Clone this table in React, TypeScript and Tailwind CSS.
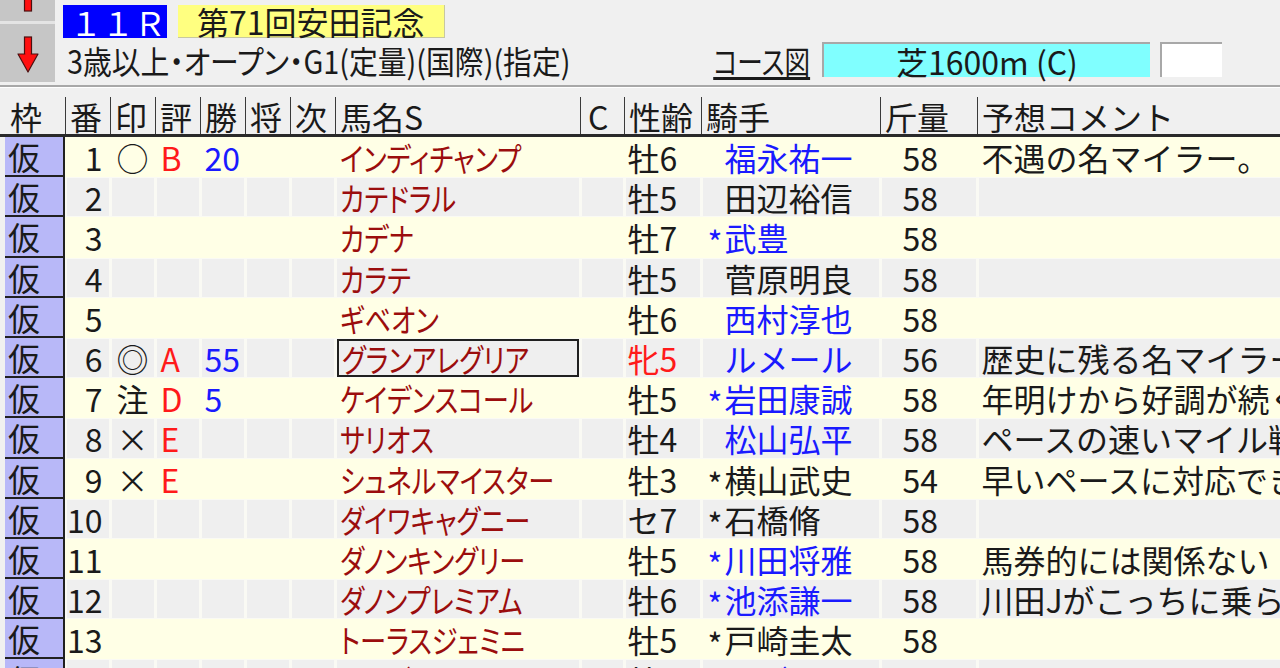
import React from 'react';

type Row = {
  no: string;
  mark?: string;
  ev?: string;
  win?: string;
  name: string;
  sex: string;
  sexRed?: boolean;
  star?: boolean;
  jockey: string;
  blue?: boolean;
  kg: string;
  comment?: string;
  selected?: boolean;
};

const rows: Row[] = [
  { no: '1', mark: '○', ev: 'B', win: '20', name: 'インディチャンプ', sex: '牡6', jockey: '福永祐一', blue: true, kg: '58', comment: '不遇の名マイラー。' },
  { no: '2', name: 'カテドラル', sex: '牡5', jockey: '田辺裕信', kg: '58' },
  { no: '3', name: 'カデナ', sex: '牡7', star: true, jockey: '武豊', blue: true, kg: '58' },
  { no: '4', name: 'カラテ', sex: '牡5', jockey: '菅原明良', kg: '58' },
  { no: '5', name: 'ギベオン', sex: '牡6', jockey: '西村淳也', blue: true, kg: '58' },
  { no: '6', mark: '◎', ev: 'A', win: '55', name: 'グランアレグリア', sex: '牝5', sexRed: true, jockey: 'ルメール', blue: true, kg: '56', comment: '歴史に残る名マイラー', selected: true },
  { no: '7', mark: '注', ev: 'D', win: '5', name: 'ケイデンスコール', sex: '牡5', star: true, jockey: '岩田康誠', blue: true, kg: '58', comment: '年明けから好調が続く' },
  { no: '8', mark: '×', ev: 'E', name: 'サリオス', sex: '牡4', jockey: '松山弘平', blue: true, kg: '58', comment: 'ペースの速いマイル戦' },
  { no: '9', mark: '×', ev: 'E', name: 'シュネルマイスター', sex: '牡3', star: true, jockey: '横山武史', kg: '54', comment: '早いペースに対応できれば' },
  { no: '10', name: 'ダイワキャグニー', sex: 'セ7', star: true, jockey: '石橋脩', kg: '58' },
  { no: '11', name: 'ダノンキングリー', sex: '牡5', star: true, jockey: '川田将雅', blue: true, kg: '58', comment: '馬券的には関係ない' },
  { no: '12', name: 'ダノンプレミアム', sex: '牡6', star: true, jockey: '池添謙一', blue: true, kg: '58', comment: '川田Jがこっちに乗らない' },
  { no: '13', name: 'トーラスジェミニ', sex: '牡5', star: true, jockey: '戸崎圭太', kg: '58' },
  { no: '14', name: 'ラウダシオン', sex: '牡4', star: true, jockey: 'Ｍデムーロ', blue: true, kg: '58', comment: 'ここも買える一頭だが' },
];

const Cell = ({ w, gray, className, children }: { w: string; gray: boolean; className?: string; children?: React.ReactNode }) => (
  <div className={`shrink-0 h-full px-[1.5px] py-[1px] ${w}`}>
    <div className={`h-full flex items-center whitespace-nowrap ${gray ? 'bg-[#efefef]' : ''} ${className ?? ''}`}>{children}</div>
  </div>
);

const Head = ({ w, label, className }: { w: string; label: string; className?: string }) => (
  <div className={`shrink-0 h-full pt-[9px] ${w}`}>
    <div className={`h-full border-l-[1.5px] border-[#3a3a3a] flex items-center whitespace-nowrap ${className ?? 'pl-[4px]'}`}>{label}</div>
  </div>
);

const App = () => {
  return (
    <div className="w-[1280px] h-[668px] overflow-hidden bg-[#f0f0f0] text-[32px] leading-none text-[#1a1a1a] font-['Noto_Sans_CJK_JP',sans-serif]">
      {/* top info */}
      <div className="flex h-[85px]">
        <div className="w-[55px] shrink-0 flex flex-col">
          <div className="h-[21px] bg-[#c6c6c6] overflow-hidden flex justify-center">
            <svg width="20" height="21" viewBox="0 0 20 21">
              <rect x="6.5" y="-4" width="7" height="15" fill="#ff1010" stroke="#4a1010" strokeWidth="1.2" />
            </svg>
          </div>
          <div className="h-[3px] bg-[#e4e4e4]" />
          <div className="h-[58px] bg-[#c6c6c6] flex justify-center">
            <svg width="24" height="58" viewBox="0 0 24 58">
              <rect x="8.5" y="13" width="7" height="18" fill="#ff1010" stroke="#4a1010" strokeWidth="1.2" />
              <polygon points="2,30 22,30 12,48" fill="#ff1010" stroke="#4a1010" strokeWidth="1.2" strokeLinejoin="round" />
              <rect x="9.3" y="28" width="5.4" height="4" fill="#ff1010" />
            </svg>
          </div>
        </div>
        <div className="flex-1 min-w-0 flex flex-col pt-[5px]">
          <div className="flex h-[33px]">
            <div className="ml-[8px] w-[104px] h-full bg-[#0000ff] text-white flex items-center pl-[7px]">１１Ｒ</div>
            <div className="ml-[11px] w-[267px] h-full bg-[#ffff80] border-r border-b border-[#c8c8a0] flex items-center pl-[19px]">第71回安田記念</div>
          </div>
          <div className="flex items-center h-[35px] mt-[4px]">
            <span className="ml-[12px] inline-block whitespace-nowrap origin-left scale-x-[0.9] [font-feature-settings:'palt']">3歳以上・オープン・G1(定量)(国際)(指定)</span>
            <div className="flex-1" />
            <span className="inline-block whitespace-nowrap origin-right scale-x-[0.8] underline decoration-[3px] underline-offset-[3px] [font-feature-settings:'palt']">コース図</span>
            <div className="ml-[12px] w-[328px] h-full bg-[#80ffff] border-t-2 border-l-2 border-[#a8a8a8] flex items-center justify-center">芝1600m (C)</div>
            <div className="ml-[10px] w-[62px] h-full bg-white border-t-2 border-l-2 border-[#a8a8a8]" />
            <div className="w-[58px]" />
          </div>
        </div>
      </div>
      <div className="h-[3px] border-t-2 border-[#a8a8a8] border-b border-b-white" />

      {/* header */}
      <div className="flex h-[49px] border-b-[3px] border-[#2a2a2a] pl-[5px]">
        <div className="w-[60px] shrink-0 h-full pt-[9px] flex items-center pl-[5px]">枠</div>
        <Head w="w-[45px]" label="番" />
        <Head w="w-[45px]" label="印" />
        <Head w="w-[45px]" label="評" />
        <Head w="w-[45px]" label="勝" />
        <Head w="w-[45px]" label="将" />
        <Head w="w-[45px]" label="次" />
        <Head w="w-[245px]" label="馬名S" />
        <Head w="w-[44px]" label="C" className="pl-[7px]" />
        <Head w="w-[77px]" label="性齢" />
        <Head w="w-[179px]" label="騎手" />
        <Head w="w-[97px]" label="斤量" />
        <div className="flex-1 min-w-0 h-full pt-[9px]">
          <div className="h-full border-l-[1.5px] border-[#3a3a3a] flex items-center pl-[4px] whitespace-nowrap">予想コメント</div>
        </div>
      </div>

      {/* rows */}
      {rows.map((r, i) => {
        const gray = i % 2 === 1;
        return (
          <div key={r.no} className="flex h-[40.2px] pl-[5px]">
            <div className="w-[60px] shrink-0 h-full bg-[#b8b8f8] border-r-2 border-b-2 border-[#202020] flex items-center pl-[3px]">仮</div>
            <div className={`flex-1 min-w-0 flex h-full ${gray ? 'bg-[#fafaf4]' : 'bg-[#ffffe6]'}`}>
              <Cell w="w-[45px]" gray={gray} className="justify-end pr-[6px]">{r.no}</Cell>
              <Cell w="w-[45px]" gray={gray} className="justify-center">{r.mark}</Cell>
              <Cell w="w-[45px]" gray={gray} className="pl-[4px] text-[#ff1a1a]">{r.ev}</Cell>
              <Cell w="w-[45px]" gray={gray} className="pl-[3px] text-[#1a1aff]">{r.win}</Cell>
              <Cell w="w-[45px]" gray={gray} />
              <Cell w="w-[45px]" gray={gray} />
              <Cell
                w="w-[245px]"
                gray={gray}
                className={`pl-[3px] text-[#9b0d0d] ${r.selected ? 'border-2 border-[#202020] pl-[1px]' : ''}`}
              >
                <span className="inline-block origin-left scale-x-[0.82] [font-feature-settings:'palt']">{r.name}</span>
              </Cell>
              <Cell w="w-[44px]" gray={gray} />
              <Cell w="w-[77px]" gray={gray} className={`pl-[2px] ${r.sexRed ? 'text-[#ff1a1a]' : ''}`}>{r.sex}</Cell>
              <Cell w="w-[179px]" gray={gray} className={`pl-[3px] ${r.blue ? 'text-[#1a1aff]' : ''}`}>
                <span className="w-[19px] shrink-0 text-center translate-y-[4px]">{r.star ? '*' : ''}</span>
                {r.jockey}
              </Cell>
              <Cell w="w-[97px]" gray={gray} className="pl-[21px]">{r.kg}</Cell>
              <div className="flex-1 min-w-0 h-full pl-[1.5px] py-[1px]">
                <div className={`h-full flex items-center pl-[3px] whitespace-nowrap overflow-hidden ${gray ? 'bg-[#efefef]' : ''}`}>{r.comment}</div>
              </div>
            </div>
          </div>
        );
      })}
    </div>
  );
};

export default App;
